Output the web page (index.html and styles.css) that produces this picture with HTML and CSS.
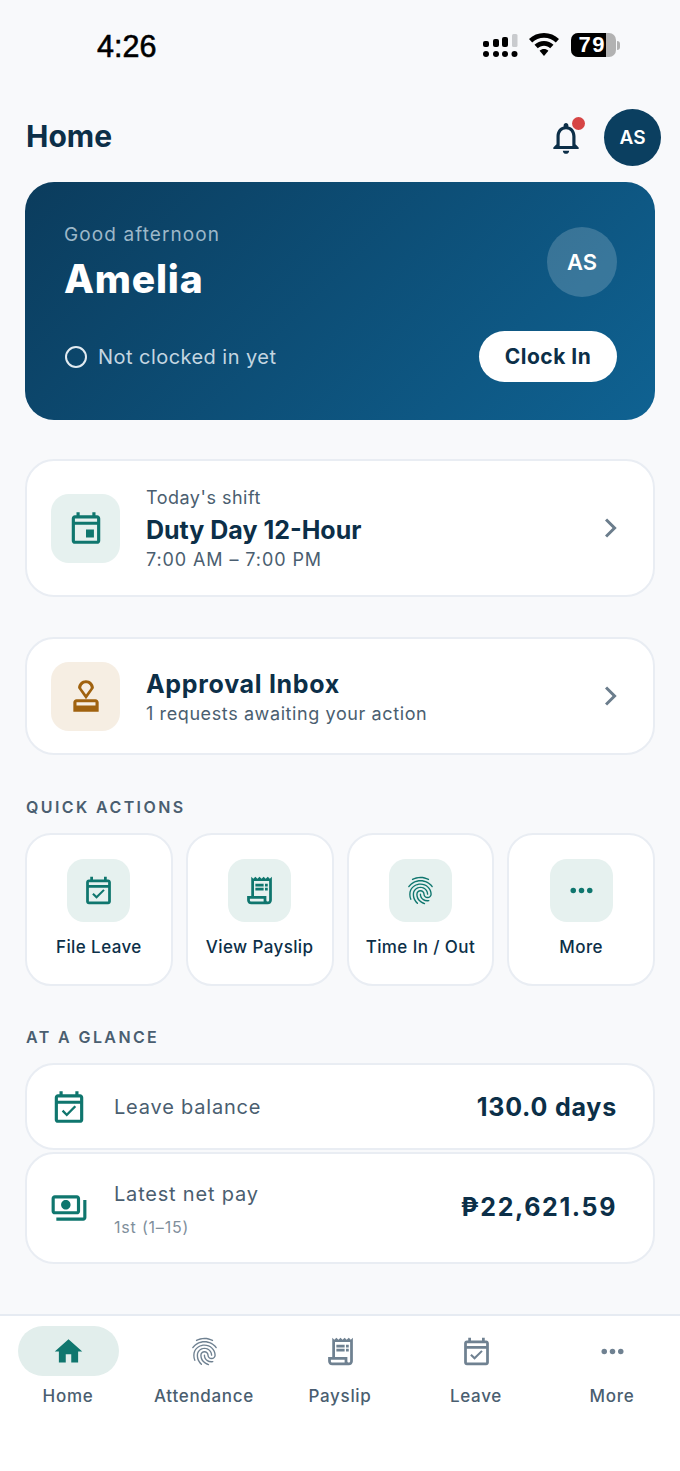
FILE: index.html
```html
<!DOCTYPE html>
<html lang="en">
<head>
  <meta charset="UTF-8">
  <meta name="viewport" content="width=device-width, initial-scale=1.0">
  <title>Home</title>
  <link rel="stylesheet" href="styles.css">
</head>
<body>
  <svg class="sprite" width="0" height="0">
    <defs>
      <symbol id="i-event-check" viewBox="0 0 24 24"><path d="M19 4h-1V2h-2v2H8V2H6v2H5c-1.11 0-1.99.9-1.99 2L3 20c0 1.1.89 2 2 2h14c1.1 0 2-.9 2-2V6c0-1.1-.9-2-2-2zm0 16H5V10h14v10zm0-12H5V6h14v2zM16.53 12.06 15.47 11l-4.88 4.88-2.12-2.12-1.06 1.06L10.59 18l5.94-5.94z"/></symbol>
      <symbol id="i-receipt" viewBox="0 0 24 24"><path d="M19.5 3.5 18 2l-1.5 1.5L15 2l-1.5 1.5L12 2l-1.5 1.5L9 2 7.5 3.5 6 2v14H3v3c0 1.66 1.34 3 3 3h12c1.66 0 3-1.34 3-3V2l-1.5 1.5zM15 20H6c-.55 0-1-.45-1-1v-1h10v2zm4-1c0 .55-.45 1-1 1s-1-.45-1-1v-3H8V5h11v14zM9 7h6v2H9zM16 7h2v2h-2zM9 10h6v2H9zM16 10h2v2h-2z"/></symbol>
      <symbol id="i-finger" viewBox="0 0 24 24"><path d="M17.81 4.47c-.08 0-.16-.02-.23-.06C15.66 3.42 14 3 12.01 3c-1.98 0-3.86.47-5.57 1.41-.24.13-.54.04-.68-.2-.13-.24-.04-.55.2-.68C7.82 2.52 9.86 2 12.01 2c2.13 0 3.99.47 6.03 1.52.25.13.34.43.21.67-.09.18-.26.28-.44.28zM3.5 9.72c-.1 0-.2-.03-.29-.09-.23-.16-.28-.47-.12-.7.99-1.4 2.25-2.5 3.75-3.27C9.98 4.04 14 4.03 17.15 5.65c1.5.77 2.76 1.86 3.75 3.25.16.22.11.54-.12.7-.23.16-.54.11-.7-.12-.9-1.26-2.04-2.25-3.39-2.94-2.87-1.47-6.54-1.47-9.4.01-1.36.7-2.5 1.7-3.4 2.96-.08.14-.23.21-.39.21zm6.25 12.07c-.13 0-.26-.05-.35-.15-.87-.87-1.34-1.43-2.01-2.64-.69-1.23-1.05-2.73-1.05-4.34 0-2.97 2.54-5.39 5.66-5.39s5.66 2.42 5.66 5.39c0 .28-.22.5-.5.5s-.5-.22-.5-.5c0-2.42-2.09-4.39-4.66-4.39-2.57 0-4.66 1.97-4.66 4.39 0 1.44.32 2.77.93 3.85.64 1.15 1.08 1.64 1.85 2.42.19.2.19.51 0 .71-.11.1-.24.15-.37.15zm7.17-1.85c-1.19 0-2.24-.3-3.1-.89-1.49-1.01-2.38-2.65-2.38-4.39 0-.28.22-.5.5-.5s.5.22.5.5c0 1.41.72 2.74 1.94 3.56.71.48 1.54.71 2.54.71.24 0 .64-.03 1.04-.1.27-.05.53.13.58.41.05.27-.13.53-.41.58-.57.11-1.07.12-1.21.12zM14.91 22c-.04 0-.09-.01-.13-.02-1.59-.44-2.63-1.03-3.72-2.1-1.4-1.39-2.17-3.24-2.17-5.22 0-1.62 1.38-2.94 3.08-2.94 1.7 0 3.08 1.32 3.08 2.94 0 1.07.93 1.94 2.08 1.94s2.08-.87 2.08-1.94c0-3.77-3.25-6.83-7.25-6.83-2.84 0-5.44 1.58-6.61 4.03-.39.81-.59 1.76-.59 2.8 0 .78.07 2.01.67 3.61.1.26-.03.55-.29.64-.26.1-.55-.04-.64-.29-.49-1.31-.73-2.61-.73-3.96 0-1.2.23-2.29.68-3.24 1.33-2.79 4.28-4.6 7.51-4.6 4.55 0 8.25 3.51 8.25 7.83 0 1.62-1.38 2.94-3.08 2.94s-3.08-1.32-3.08-2.94c0-1.07-.93-1.94-2.08-1.94s-2.08.87-2.08 1.94c0 1.71.66 3.31 1.87 4.51.95.94 1.86 1.46 3.27 1.85.27.07.42.35.35.61-.05.23-.26.38-.47.38z"/></symbol>
      <symbol id="i-dots" viewBox="0 0 24 24"><circle cx="6" cy="12" r="2"/><circle cx="12" cy="12" r="2"/><circle cx="18" cy="12" r="2"/></symbol>
      <symbol id="i-chevron" viewBox="0 0 24 24"><path d="M9.4 5.6 8 7l5 5-5 5 1.4 1.4 6.4-6.4z"/></symbol>
    </defs>
  </svg>

  <div class="status-bar">
    <span class="status-time">4:26</span>
    <div class="status-icons">
      <svg class="signal" width="35" height="24" viewBox="0 0 35 24">
        <rect x="0" y="8" width="6" height="6" rx="2"/>
        <rect x="10" y="6" width="6" height="8" rx="2"/>
        <rect x="19" y="4" width="6" height="10" rx="2"/>
        <rect x="29" y="1" width="5.5" height="13" rx="1.5" fill="#c9cbce"/>
        <circle cx="3" cy="21" r="3"/>
        <circle cx="13" cy="21" r="3"/>
        <circle cx="22" cy="21" r="3"/>
        <circle cx="31.5" cy="21" r="3"/>
      </svg>
      <svg class="wifi" width="30" height="23" viewBox="0 0 30 23">
        <path d="M15 0C9.2 0 4 2.3 0 6l3.2 3.4C6.3 6.5 10.4 4.7 15 4.7s8.7 1.8 11.8 4.7L30 6C26 2.3 20.8 0 15 0z"/>
        <path d="M15 8c-3.7 0-7 1.4-9.5 3.8l3.3 3.4C10.4 13.7 12.6 12.8 15 12.8s4.6.9 6.2 2.4l3.3-3.4C22 9.4 18.7 8 15 8z"/>
        <path d="M15 16c-1.7 0-3.2.6-4.4 1.7L15 23l4.4-5.3C18.2 16.6 16.7 16 15 16z"/>
      </svg>
      <div class="battery">
        <div class="battery-body"><span class="battery-fill">79</span></div>
        <span class="battery-nub"></span>
      </div>
    </div>
  </div>

  <header class="top-bar">
    <h1 class="page-title">Home</h1>
    <div class="top-actions">
      <div class="bell">
        <svg class="bell-icon" viewBox="0 0 24 24"><path d="M12 22c1.1 0 2-.9 2-2h-4c0 1.1.9 2 2 2zm6-6v-5c0-3.07-1.63-5.64-4.5-6.32V4c0-.83-.67-1.5-1.5-1.5s-1.5.67-1.5 1.5v.68C7.64 5.36 6 7.92 6 11v5l-2 2v1h16v-1l-2-2zm-2 1H8v-6c0-2.48 1.51-4.5 4-4.5s4 2.02 4 4.5v6z"/></svg>
        <span class="bell-dot"></span>
      </div>
      <div class="avatar">AS</div>
    </div>
  </header>

  <main class="content">
    <section class="hero">
      <div class="hero-top">
        <div>
          <p class="hero-greeting">Good afternoon</p>
          <p class="hero-name">Amelia</p>
        </div>
        <div class="hero-avatar">AS</div>
      </div>
      <div class="hero-bottom">
        <div class="hero-status"><span class="ring"></span>Not clocked in yet</div>
        <button class="clock-btn">Clock In</button>
      </div>
    </section>

    <a class="card card-shift">
      <div class="tile tile-lg">
        <svg class="icon-38 teal" viewBox="0 0 24 24"><path d="M17 13h-5v5h5zM19 4h-1V2h-2v2H8V2H6v2H5c-1.11 0-1.99.9-1.99 2L3 20c0 1.1.89 2 2 2h14c1.1 0 2-.9 2-2V6c0-1.1-.9-2-2-2zm0 16H5V10h14v10zm0-12H5V6h14v2z"/></svg>
      </div>
      <div class="card-text">
        <p class="card-kicker">Today's shift</p>
        <p class="card-title">Duty Day 12-Hour</p>
        <p class="card-sub card-time">7:00 AM – 7:00 PM</p>
      </div>
      <svg class="chevron"><use href="#i-chevron"/></svg>
    </a>

    <a class="card card-approval">
      <div class="tile tile-lg tile-amber">
        <svg class="icon-38 brown" viewBox="0 0 24 24"><path d="M4 16v6h16v-6c0-1.1-.9-2-2-2H6c-1.1 0-2 .9-2 2zm14 2H6v-2h12v2zM12 2C9.24 2 7 4.24 7 7l5 7 5-7c0-2.76-2.24-5-5-5zm0 9L9 7c0-1.66 1.34-3 3-3s3 1.34 3 3l-3 4z"/></svg>
      </div>
      <div class="card-text">
        <p class="card-title">Approval Inbox</p>
        <p class="card-sub">1 requests awaiting your action</p>
      </div>
      <svg class="chevron"><use href="#i-chevron"/></svg>
    </a>

    <h2 class="section-label label-actions">QUICK ACTIONS</h2>
    <div class="actions">
      <a class="action">
        <div class="tile tile-sm"><svg class="icon-33 teal"><use href="#i-event-check"/></svg></div>
        <span>File Leave</span>
      </a>
      <a class="action">
        <div class="tile tile-sm"><svg class="icon-33 teal"><use href="#i-receipt"/></svg></div>
        <span>View Payslip</span>
      </a>
      <a class="action">
        <div class="tile tile-sm"><svg class="icon-33 teal"><use href="#i-finger"/></svg></div>
        <span>Time In / Out</span>
      </a>
      <a class="action">
        <div class="tile tile-sm"><svg class="icon-33 teal"><use href="#i-dots"/></svg></div>
        <span>More</span>
      </a>
    </div>

    <h2 class="section-label label-glance">AT A GLANCE</h2>
    <div class="glance">
      <div class="glance-row row-leave">
        <svg class="icon-38 teal"><use href="#i-event-check"/></svg>
        <div class="glance-text"><p class="glance-label">Leave balance</p></div>
        <p class="glance-value">130.0 days</p>
      </div>
      <div class="glance-row row-pay">
        <svg class="icon-38 teal" viewBox="0 0 24 24"><path d="M19 14V6c0-1.1-.9-2-2-2H3c-1.1 0-2 .9-2 2v8c0 1.1.9 2 2 2h14c1.1 0 2-.9 2-2zm-2 0H3V6h14v8zm-7-7c-1.66 0-3 1.34-3 3s1.34 3 3 3 3-1.34 3-3-1.34-3-3-3zm13 0v11c0 1.1-.9 2-2 2H4v-2h17V7h2z"/></svg>
        <div class="glance-text">
          <p class="glance-label">Latest net pay</p>
          <p class="glance-sub">1st (1–15)</p>
        </div>
        <p class="glance-value">₱22,621.59</p>
      </div>
    </div>
  </main>

  <nav class="bottom-nav">
    <a class="nav-item active">
      <span class="nav-pill"><svg class="nav-icon" viewBox="0 0 24 24"><path d="M10 20v-6h4v6h5v-8h3L12 3 2 12h3v8z"/></svg></span>
      <span>Home</span>
    </a>
    <a class="nav-item">
      <span class="nav-pill"><svg class="nav-icon"><use href="#i-finger"/></svg></span>
      <span>Attendance</span>
    </a>
    <a class="nav-item">
      <span class="nav-pill"><svg class="nav-icon"><use href="#i-receipt"/></svg></span>
      <span>Payslip</span>
    </a>
    <a class="nav-item">
      <span class="nav-pill"><svg class="nav-icon"><use href="#i-event-check"/></svg></span>
      <span>Leave</span>
    </a>
    <a class="nav-item">
      <span class="nav-pill"><svg class="nav-icon"><use href="#i-dots"/></svg></span>
      <span>More</span>
    </a>
  </nav>
</body>
</html>
```

FILE: styles.css
```css
* {
  box-sizing: border-box;
}
body {
  margin: 0;
  width: 680px;
  height: 1471px;
  display: flex;
  flex-direction: column;
  overflow: hidden;
  font-family: Inter, "Noto Sans", sans-serif;
  color: #0c2f48;
  background-color: #f8f9fb;
}
p, h1, h2 {
  margin: 0;
}
.sprite {
  position: absolute;
}

/* status bar */
.status-bar {
  height: 90px;
  padding: 30px 60px 0 97px;
  display: flex;
  justify-content: space-between;
  align-items: flex-start;
}
.status-time {
  font-family: "Liberation Sans", Arial, sans-serif;
  font-size: 30.5px;
  line-height: 32px;
  font-weight: 400;
  -webkit-text-stroke: 0.6px #000;
  color: #000;
}
.status-icons {
  display: flex;
  align-items: flex-start;
  margin-top: 3px;
}
.wifi {
  margin-left: 11px;
}
.battery {
  margin-left: 12px;
  display: flex;
  align-items: center;
}
.battery-body {
  width: 45px;
  height: 24px;
  border-radius: 7px;
  background: #b2b2b2;
}
.battery-fill {
  display: block;
  width: 35px;
  height: 24px;
  border-radius: 7px 0 0 7px;
  background: #000;
  color: #fff;
  font-family: "Liberation Sans", Arial, sans-serif;
  font-size: 22px;
  line-height: 24px;
  font-weight: 700;
  letter-spacing: 1.5px;
  text-align: right;
}
.battery-nub {
  width: 3px;
  height: 9px;
  margin-left: 1px;
  border-radius: 0 3px 3px 0;
  background: #b2b2b2;
}

/* header */
.top-bar {
  height: 92px;
  padding: 19px 19px 0 26px;
  display: flex;
  justify-content: space-between;
  align-items: flex-start;
}
.page-title {
  font-size: 30px;
  line-height: 54px;
  font-weight: 700;
}
.top-actions {
  display: flex;
  align-items: center;
  gap: 19px;
}
.bell {
  position: relative;
  width: 38px;
  height: 38px;
}
.bell-icon {
  width: 38px;
  height: 38px;
  fill: #0c2f48;
}
.bell-dot {
  position: absolute;
  top: -2px;
  right: 0;
  width: 13px;
  height: 13px;
  border-radius: 50%;
  background: #d64545;
}
.avatar {
  width: 57px;
  height: 57px;
  border-radius: 50%;
  background: #0b3f60;
  color: #fff;
  font-size: 19px;
  font-weight: 600;
  display: flex;
  align-items: center;
  justify-content: center;
}

/* page body */
.content {
  padding: 0 25px;
}
.hero {
  height: 238px;
  padding: 40px 38px 0 39px;
  border-radius: 29px;
  background: linear-gradient(135deg, #0b3c5d, #0f6292);
  color: #fff;
}
.hero-top {
  display: flex;
  justify-content: space-between;
  align-items: flex-start;
}
.hero-greeting {
  font-size: 19px;
  line-height: 26px;
  letter-spacing: 1.1px;
  color: #9db8c9;
}
.hero-name {
  margin-top: 8px;
  font-size: 39px;
  line-height: 46px;
  font-weight: 800;
  letter-spacing: 0.8px;
}
.hero-avatar {
  width: 70px;
  height: 70px;
  margin-top: 5px;
  border-radius: 50%;
  background: rgba(255, 255, 255, 0.18);
  font-size: 22px;
  font-weight: 600;
  display: flex;
  align-items: center;
  justify-content: center;
}
.hero-bottom {
  margin-top: 29px;
  display: flex;
  justify-content: space-between;
  align-items: center;
}
.hero-status {
  display: flex;
  align-items: center;
  gap: 11px;
  font-size: 20px;
  letter-spacing: 0.45px;
  color: #c4d6e1;
}
.ring {
  width: 22px;
  height: 22px;
  margin-left: 1px;
  border: 2px solid #e2ebf1;
  border-radius: 50%;
}
.clock-btn {
  width: 138px;
  height: 51px;
  border: none;
  border-radius: 26px;
  background: #fff;
  color: #0c2f48;
  font-family: inherit;
  font-size: 21px;
  font-weight: 700;
  letter-spacing: 0.5px;
}

.card {
  display: flex;
  align-items: center;
  padding: 0 24px;
  background: #fff;
  border: 2px solid #e9edf3;
  border-radius: 29px;
}
.card-shift {
  height: 138px;
  margin-top: 39px;
}
.card-approval {
  height: 118px;
  margin-top: 40px;
}
.tile {
  display: flex;
  align-items: center;
  justify-content: center;
  background: #e6f1ef;
}
.tile-lg {
  width: 69px;
  height: 69px;
  border-radius: 18px;
}
.tile-sm {
  width: 63px;
  height: 63px;
  border-radius: 17px;
}
.tile-amber {
  background: #f6eee3;
}
.icon-38 {
  width: 38px;
  height: 38px;
  flex: none;
}
.icon-33 {
  width: 33px;
  height: 33px;
}
.teal {
  fill: #0f766e;
}
.brown {
  fill: #a0620f;
}
.card-text {
  flex: 1;
  margin-left: 26px;
  padding-top: 2px;
}
.card-kicker {
  margin-bottom: 3px;
  font-size: 18px;
  line-height: 24px;
  letter-spacing: 0.5px;
  color: #4a5e70;
}
.card-title {
  font-size: 25px;
  line-height: 34px;
  font-weight: 700;
}
.card-approval .card-title {
  letter-spacing: 0.7px;
}
.card-sub {
  font-size: 18px;
  line-height: 26px;
  letter-spacing: 0.6px;
  color: #4a5e70;
}
.card-time {
  letter-spacing: 0.9px;
}
.chevron {
  width: 36px;
  height: 36px;
  flex: none;
  fill: #6b7d8c;
}

.section-label {
  font-size: 16px;
  line-height: 20px;
  font-weight: 600;
  letter-spacing: 2.4px;
  color: #4a5e70;
}
.label-actions {
  margin: 42px 0 16px 1px;
}
.label-glance {
  margin: 41px 0 16px 1px;
}
.actions {
  display: grid;
  grid-template-columns: repeat(4, 1fr);
  gap: 13px;
}
.action {
  height: 153px;
  padding-top: 24px;
  display: flex;
  flex-direction: column;
  align-items: center;
  background: #fff;
  border: 2px solid #e9edf3;
  border-radius: 26px;
  font-size: 17px;
  font-weight: 500;
  letter-spacing: 0.4px;
}
.action span {
  margin-top: 15px;
  line-height: 20px;
}

.glance {
  display: flex;
  flex-direction: column;
  gap: 2px;
}
.glance-row {
  display: flex;
  align-items: center;
  padding: 0 36px 0 23px;
  background: #fff;
  border: 2px solid #e9edf3;
  border-radius: 29px;
}
.row-leave {
  height: 87px;
}
.row-pay {
  height: 112px;
}
.glance-text {
  flex: 1;
  margin-left: 26px;
}
.row-pay .glance-text {
  padding-top: 1px;
}
.glance-label {
  font-size: 20px;
  line-height: 26px;
  letter-spacing: 0.8px;
  color: #4a5e70;
}
.glance-sub {
  margin-top: 10px;
  font-size: 16px;
  line-height: 20px;
  letter-spacing: 0.8px;
  color: #7f8f9c;
}
.glance-value {
  font-size: 25px;
  font-weight: 700;
  letter-spacing: 0.8px;
}
.row-pay .glance-value {
  margin-bottom: 3px;
  letter-spacing: 1.6px;
}

/* bottom nav */
.bottom-nav {
  margin-top: auto;
  height: 157px;
  padding-top: 10px;
  display: grid;
  grid-template-columns: repeat(5, 1fr);
  background: #fff;
  border-top: 2px solid #e6ebf2;
}
.nav-item {
  display: flex;
  flex-direction: column;
  align-items: center;
  font-size: 17px;
  font-weight: 500;
  line-height: 20px;
  letter-spacing: 0.7px;
  color: #4a5e70;
}
.nav-pill {
  width: 101px;
  height: 50px;
  margin-bottom: 10px;
  border-radius: 25px;
  display: flex;
  align-items: center;
  justify-content: center;
}
.nav-icon {
  width: 33px;
  height: 33px;
  fill: #6f8191;
}
.active .nav-pill {
  background: #e2eeec;
}
.active .nav-icon {
  fill: #0f766e;
}
```
